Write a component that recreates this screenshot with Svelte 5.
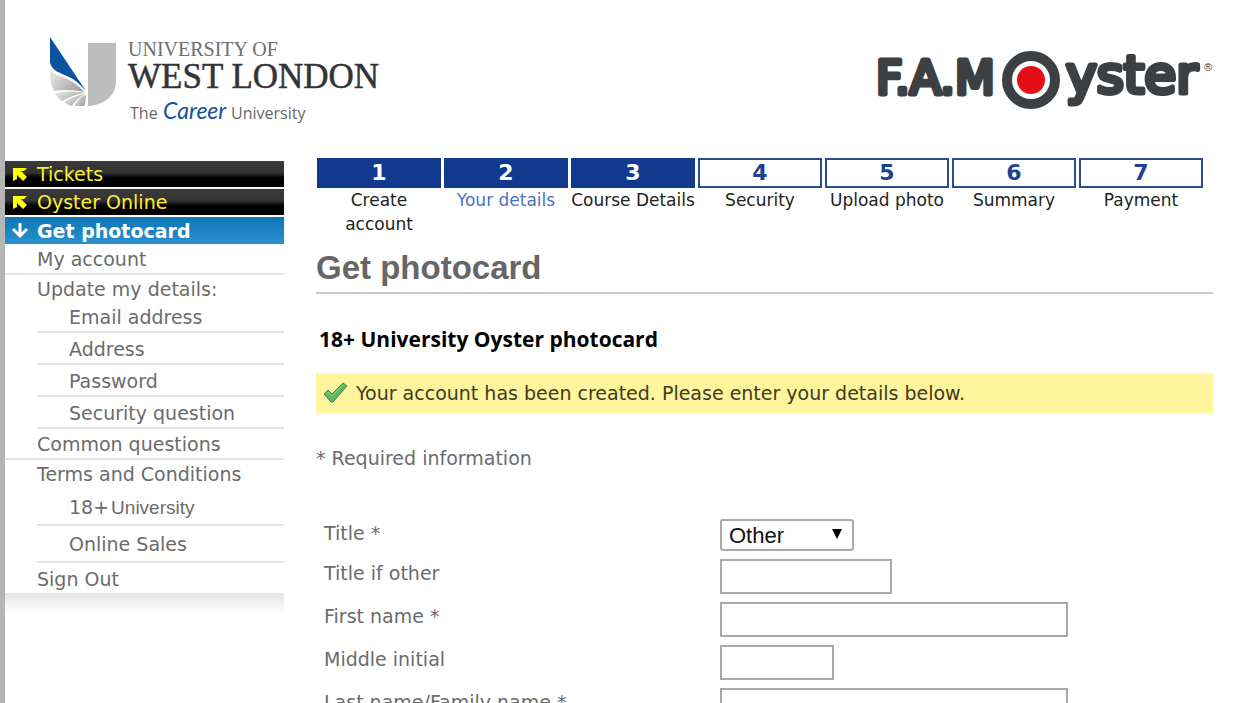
<script>
  const topLinks = ["Tickets", "Oyster Online"];

  const menu = [
    { label: "My account" },
    {
      label: "Update my details:",
      children: ["Email address", "Address", "Password", "Security question"],
    },
    { label: "Common questions" },
    { label: "Terms and Conditions", children: ["18+", "Online Sales"], tall: true },
    { label: "Sign Out", last: true },
  ];

  const steps = [
    "Create account",
    "Your details",
    "Course Details",
    "Security",
    "Upload photo",
    "Summary",
    "Payment",
  ];
  const stepsFilled = 3;
  const currentStep = 2;

  const fields = [
    { id: "title-other", label: "Title if other", size: "medium" },
    { id: "first-name", label: "First name *", size: "large" },
    { id: "middle-initial", label: "Middle initial", size: "small" },
    { id: "last-name", label: "Last name/Family name *", size: "large" },
  ];

  let title = "Other";
</script>

<div class="page">
  <header class="header">
    <svg class="uwl" width="336" height="90" viewBox="0 0 336 90" role="img" aria-label="University of West London">
      <defs>
        <linearGradient id="feather" x1="0" y1="0" x2="1" y2="0.6">
          <stop offset="0" stop-color="#f0f0f0" />
          <stop offset="1" stop-color="#a2a2a2" />
        </linearGradient>
      </defs>
      <path d="M1 0 L37 54 C30 47 27 43 20 40 C12 36 2 34 1 25 Z" fill="#0b52a0" />
      <path d="M1 31 C4 39 13 39 20 43 C28 47 31 51 36 55 C26 53 16 52 5 54 C2 48 1 41 1 31 Z" fill="url(#feather)" />
      <path d="M6 56 C16 54 27 54 36 56 C28 57 20 60 13 64 C10 62 8 60 6 56 Z" fill="url(#feather)" />
      <path d="M15 65 C22 61 29 58 36 57 C30 60 26 64 23 69 C20 68 17 67 15 65 Z" fill="url(#feather)" />
      <path d="M25 69 C28 64 31 60 37 58 L36 67 Q36 69 34 69 Z" fill="url(#feather)" />
      <path d="M39 6 H67 V44 C67 59 55 68 39 69 Z" fill="#bdbdbd" />
      <text x="79" y="19" class="uwl-top" font-size="20">UNIVERSITY OF</text>
      <text x="79" y="51" class="uwl-name" font-size="35">WEST LONDON</text>
      <text x="81" y="82" class="uwl-tag" font-size="16">The</text>
      <text x="114" y="82" class="uwl-script" font-size="23">Career</text>
      <text x="182" y="82" class="uwl-tag" font-size="16">University</text>
    </svg>
    <svg class="fam" width="336" height="62" viewBox="0 0 336 62" role="img" aria-label="F.A.M Oyster">
      <text x="-1" y="45" class="fam-text" font-size="46">F.A.M</text>
      <circle cx="154" cy="31" r="24" fill="#fff" stroke="#3c4043" stroke-width="10" />
      <circle cx="154" cy="31" r="14" fill="#e30f17" />
      <text x="189" y="44" class="fam-text" font-size="52">yster</text>
      <text x="327" y="22" class="fam-mark" font-size="11">®</text>
    </svg>
  </header>

  <div class="columns">
    <nav class="sidebar">
      {#each topLinks as link}
        <a class="top-link" href="#tickets">
          <svg width="14" height="13" viewBox="0 0 14 13">
            <path d="M0 0 H14 L11 3 H8 L14 9 L10 13 L4 7 V11 L0 13 Z" fill="#ffff00" />
          </svg>
          {link}
        </a>
      {/each}
      <a class="top-link top-link-active" href="#photocard">
        <svg width="18" height="16" viewBox="0 0 18 16">
          <path d="M9 0 V13 M2 6 L9 13 L16 6" fill="none" stroke="#fff" stroke-width="3" />
        </svg>
        Get photocard
      </a>
      <ul class="menu">
        {#each menu as item}
          <li class:tall={item.tall} class:last={item.last}>
            <a class="menu-link" class:menu-parent={item.children} href="#menu">{item.label}</a>
            {#if item.children}
              <ul class="submenu">
                {#each item.children as child}
                  <li>
                    <a href="#submenu">
                      {child}{#if child === "18+"}<span class="uni">University</span>{/if}
                    </a>
                  </li>
                {/each}
              </ul>
            {/if}
          </li>
        {/each}
      </ul>
      <div class="shadow"></div>
    </nav>

    <main class="content">
      <ol class="steps">
        {#each steps as step, i}
          <li class:filled={i < stepsFilled} class:current={i + 1 === currentStep}>
            <span class="step-number">{i + 1}</span>
            <span class="step-label">{step}</span>
          </li>
        {/each}
      </ol>

      <h1>Get photocard</h1>
      <h2>18+ University Oyster photocard</h2>

      <p class="notice">
        <svg width="26" height="22" viewBox="0 0 26 22">
          <path d="M1 12 L5 8 L9 12 L20 1 L24 4 L10 20 L8 20 Z" fill="#5fb760" stroke="#3d8a45" stroke-width="1" stroke-linejoin="round" />
          <path d="M3 12 L5 10 L9 14 L20 3" fill="none" stroke="#8fd48c" stroke-width="1" />
        </svg>
        Your account has been created. Please enter your details below.
      </p>

      <p class="required">* Required information</p>

      <form class="form">
        <div class="row">
          <label for="title">Title *</label>
          <div class="select">
            <select id="title" bind:value={title}>
              <option>Mr</option>
              <option>Mrs</option>
              <option>Miss</option>
              <option>Ms</option>
              <option>Other</option>
            </select>
            <svg width="10" height="10" viewBox="0 0 10 10">
              <path d="M0 0 H10 L5 10 Z" fill="#000" />
            </svg>
          </div>
        </div>
        {#each fields as field}
          <div class="row">
            <label for={field.id}>{field.label}</label>
            <input id={field.id} class={field.size} type="text" />
          </div>
        {/each}
      </form>
    </main>
  </div>
</div>

<style>
  :global(body) {
    margin: 0;
    background: #fff;
  }
  .page {
    box-sizing: border-box;
    min-height: 100vh;
    border-left: 5px solid #b5b5b5;
    font-family: "DejaVu Sans", Verdana, sans-serif;
    font-size: 19px;
    color: #6b6b6b;
  }
  .page * {
    box-sizing: border-box;
  }
  a {
    color: inherit;
    text-decoration: none;
  }
  ul,
  ol {
    list-style: none;
    margin: 0;
    padding: 0;
  }
  .header {
    display: flex;
    justify-content: space-between;
    align-items: flex-start;
    padding: 37px 32px 31px 44px;
  }
  .fam {
    margin-top: 12px;
    overflow: visible;
  }
  .uwl-top,
  .uwl-name {
    font-family: "Liberation Serif", serif;
    fill: #6d6e70;
  }
  .uwl-name {
    fill: #333436;
    stroke: #333436;
    stroke-width: 0.5;
  }
  .uwl-tag {
    font-family: "Open Sans", sans-serif;
    fill: #66686a;
  }
  .uwl-script {
    font-family: Lato, cursive;
    font-style: italic;
    fill: #1a4f9c;
  }
  .fam-text {
    font-family: "DejaVu Sans", sans-serif;
    fill: #3c4043;
    stroke: #3c4043;
    stroke-width: 5;
    stroke-linejoin: round;
  }
  .fam-mark {
    font-family: "Liberation Sans", sans-serif;
    fill: #3c4043;
  }
  .columns {
    display: flex;
    align-items: flex-start;
    gap: 32px;
    padding-right: 32px;
  }
  .sidebar {
    width: 279px;
    flex-shrink: 0;
    padding-top: 3px;
  }
  .top-link {
    display: flex;
    align-items: center;
    height: 26px;
    margin-bottom: 2px;
    padding-left: 8px;
    gap: 10px;
    color: #ffee33;
    background: linear-gradient(#3a3a3a 0%, #333 45%, #000 65%, #000 100%);
  }
  .top-link-active {
    height: 27px;
    padding-left: 6px;
    gap: 8px;
    margin-bottom: 0;
    color: #fff;
    font-weight: bold;
    background: linear-gradient(#0d76b6, #2b90cf);
  }
  .menu-link {
    display: block;
    padding: 2px 0 1px 32px;
    line-height: 26px;
    border-bottom: 2px solid #e4e4e4;
  }
  .menu-parent {
    padding: 1px 0 2px 32px;
    border-bottom: 0;
  }
  .last .menu-link {
    padding: 3px 0 1px 32px;
    border-bottom: 0;
  }
  .submenu {
    padding-left: 32px;
  }
  .submenu a {
    display: block;
    padding: 3px 0 0 32px;
    line-height: 27px;
    border-bottom: 2px solid #e4e4e4;
  }
  .submenu li:first-child a {
    padding-top: 0;
  }
  .tall .submenu a,
  .tall .submenu li:first-child a {
    padding-top: 2px;
    line-height: 33px;
  }
  .uni {
    font-family: "Liberation Sans", Arial, sans-serif;
    margin-left: 2px;
  }
  .shadow {
    height: 20px;
    background: linear-gradient(#e4e4e4, #fff);
  }
  .content {
    flex: 1;
    min-width: 0;
  }
  .steps {
    display: grid;
    grid-template-columns: repeat(7, 1fr);
    gap: 3px;
    padding: 0 10px 0 1px;
    font-size: 17px;
    line-height: 24px;
    text-align: center;
    color: #222;
  }
  .step-number {
    display: block;
    border: 2px solid #2b4c8f;
    font-size: 22px;
    font-weight: bold;
    line-height: 26px;
    color: #1f3f8f;
  }
  .filled .step-number {
    background: #113a8f;
    border-color: #113a8f;
    color: #fff;
  }
  .step-label {
    display: block;
  }
  .current .step-label {
    color: #4a72c4;
  }
  h1 {
    margin: 13px 0 0;
    padding-bottom: 5px;
    border-bottom: 2px solid #c8c8c8;
    font-family: "Liberation Sans", Arial, sans-serif;
    font-size: 33px;
    line-height: 38px;
    color: #666;
  }
  h2 {
    margin: 31px 0 20px;
    padding-left: 3px;
    font-family: "Open Sans", Calibri, sans-serif;
    font-size: 21px;
    line-height: 28px;
    color: #000;
  }
  .notice {
    display: flex;
    align-items: center;
    gap: 7px;
    min-height: 40px;
    margin: 0;
    padding-left: 7px;
    background: #fff59c;
    color: #3f3a22;
  }
  .required {
    margin: 32px 0 48px;
    line-height: 26px;
  }
  .form {
    padding-left: 8px;
  }
  .row {
    display: grid;
    grid-template-columns: 396px 1fr;
    align-items: start;
    margin-bottom: 8px;
  }
  label {
    line-height: 28px;
  }
  input {
    height: 35px;
    padding: 0 8px;
    border: 2px solid #a9a9a9;
    font: inherit;
  }
  .small {
    width: 114px;
  }
  .medium {
    width: 172px;
  }
  .large {
    width: 348px;
  }
  .select {
    position: relative;
    width: 134px;
  }
  select {
    display: block;
    appearance: none;
    width: 100%;
    height: 32px;
    padding: 0 7px;
    border: 2px solid #a9a9a9;
    border-radius: 3px;
    background: #fff;
    color: #111;
    font-family: "Liberation Sans", Arial, sans-serif;
    font-size: 22px;
  }
  .select svg {
    position: absolute;
    top: 10px;
    right: 12px;
    pointer-events: none;
  }
</style>
